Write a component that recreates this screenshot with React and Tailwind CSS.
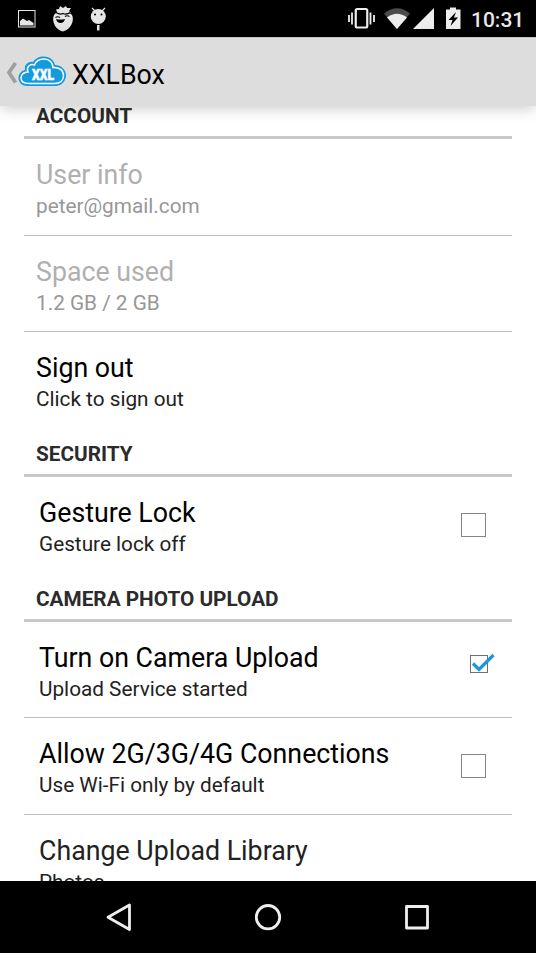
import React from 'react'

function SectionHeader({ children, className = 'h-12' }) {
  return (
    <div className={`flex items-end border-b-3 border-[#c8c8c8] px-3 pb-2 ${className}`}>
      <h2 className="text-[20.75px] leading-6 font-bold text-[#2b2b2b]">{children}</h2>
    </div>
  )
}

function Checkbox({ checked }) {
  if (checked) {
    return (
      <svg width="28" height="26" viewBox="0 0 28 26" fill="none" className="mt-7 mr-4 self-start">
        <rect x="2.5" y="5.5" width="17" height="17" stroke="#707070" />
        <path d="M5 13.500l6 6L25.500 5" stroke="#1a96dc" strokeWidth="3.2" />
      </svg>
    )
  }
  return <span className="mr-[26px] h-6 w-[25px] border border-[#858585]" />
}

function Row({ title, summary, disabled, inset, checkbox, checked, divider, titleClass, className = '' }) {
  const tone = titleClass || (disabled ? 'text-[#b0b0b0]' : 'text-black')
  return (
    <div className={`flex items-center ${divider ? 'border-b border-[#bdbdbd]' : ''} ${inset ? 'pl-[15px]' : 'pl-3'} ${className}`}>
      <div className="min-w-0 flex-1 pt-[7px] whitespace-nowrap">
        <div className={`text-[26.75px] leading-8 ${tone}`}>{title}</div>
        <div className={`text-[20.75px] leading-[31px] ${disabled ? 'text-[#979797]' : 'text-[#222]'}`}>{summary}</div>
      </div>
      {checkbox && <Checkbox checked={checked} />}
    </div>
  )
}

function StatusBar() {
  return (
    <div className="flex h-[37px] shrink-0 bg-black">
      <svg width="120" height="37" viewBox="0 0 120 37" fill="#e6e6e6">
        {/* screenshot notification */}
        <rect x="18.5" y="10.5" width="16.500" height="16.5" fill="none" stroke="#e6e6e6" />
        <path d="M20 25.500v-4.500l3-2.500 4 2.500 2-1 3 2 1.500 1v2.500z" />
        {/* strawberry face */}
        <path d="M54 15c2-2.500 5-1.500 9-1.500s7-1.500 9 1.500c3 6-2 15-9 16.500C56 30.500 51 21 54 15z" />
        <path d="M56 9.500l3-.5 1-3 3 2 3-2 1 2 4 0-2 3 2 2-8 1-8 0 2-2z" />
        <path d="M56 12.500q4 2.500 7 1 4 1.500 7-1M55.500 17.500q2-1.500 4.500 0M65 16.500q2-1.500 4.500 0" fill="none" stroke="#000" strokeWidth="1.200" />
        <path d="M56 19q5 1 9 0-1 4-4.500 4T56 19z" fill="#000" />
        {/* debug bug */}
        <circle cx="98.300" cy="16.500" r="7.500" />
        <path d="M95 11l-3-3M102 11l3-3" stroke="#e6e6e6" strokeWidth="1.200" />
        <rect x="97" y="25" width="2.500" height="5.500" />
        <circle cx="95" cy="14.500" r="1" fill="#000" />
        <circle cx="101.500" cy="14.500" r="1" fill="#000" />
      </svg>
      <svg width="125" height="37" viewBox="340 0 125 37" className="ml-auto" fill="#eee">
        {/* vibrate */}
        <rect x="355.750" y="9" width="11.500" height="18.500" rx="1.500" fill="none" stroke="#eee" strokeWidth="2.200" />
        <path d="M349 15v7M352 12.500v12M370.500 12.500v12M374 15v7" stroke="#eee" strokeWidth="1.800" />
        {/* wifi */}
        <path d="M384 13.500Q397 3 410 13.500L397 29z" fill="#4c4c4c" />
        <path d="M387 17.500Q397 10 407 17.500L397 29z" />
        {/* signal */}
        <path d="M434 8v21h-21z" />
        {/* battery */}
        <path d="M446 9.500h4V7.500h6v2h4.500V29H446z" />
        <path d="M456 12l-7.500 8h4l-2 6 7.500-8.500h-4z" fill="#000" />
      </svg>
      <span className="w-[71px] pl-[6px] text-[21px] leading-[40px] font-medium text-[#e8e8e8]">10:31</span>
    </div>
  )
}

function ActionBar() {
  return (
    <header className="relative z-10 flex h-[69px] shrink-0 items-center border-t border-[#c4c4c4] bg-[#dddddd] shadow-[0_2px_14px_rgba(0,0,0,0.22)]">
      <svg width="72" height="68" viewBox="0 38 72 68">
        <path d="M15.500 63L9 72.500l6.500 10" fill="none" stroke="#a0a0a0" strokeWidth="3.800" />
        <path
          d="M28 86C22 86 18.500 82.500 18.500 78c0-4 2.500-7 6.500-8-1-5 3-9 8-8 2-3.500 6-5.500 11-5.500 6 0 10 4 11 8.500 7 .5 11 5 11 10.500S61.500 86 55 86z"
          fill="#139bdd"
        />
        <path
          d="M29 83.500C24 83.500 21 81.500 21 78c0-3.500 3-6 7-6-2-5 2-8.500 6.500-7 1.500-4 5-6 9.500-6 5.500 0 9 4 9 8.500 6.500-.5 10.500 3 10.500 8s-3.500 8-9 8z"
          fill="none"
          stroke="#fff"
          strokeWidth="1.500"
        />
        <text x="32" y="80" fill="#fff" stroke="#fff" strokeWidth="0.5" fontFamily="Roboto" fontSize="14" fontWeight="900" textLength="22" lengthAdjust="spacingAndGlyphs">XXL</text>
      </svg>
      <h1 className="pt-1.5 text-[26.75px] text-black">XXLBox</h1>
    </header>
  )
}

function NavBar() {
  return (
    <nav className="h-[72px] shrink-0 bg-black">
      <svg width="536" height="72" viewBox="0 881 536 72" fill="none" stroke="#eee" strokeWidth="2.800" strokeLinejoin="round">
        <path d="M129.500 905v24.500l-21.500-12.300z" />
        <circle cx="268" cy="917.200" r="11.700" />
        <rect x="406.500" y="906.500" width="21" height="21.500" />
      </svg>
    </nav>
  )
}

export default function App() {
  return (
    <div className="flex h-[953px] w-[536px] flex-col overflow-hidden bg-white font-[Roboto,sans-serif]">
      <StatusBar />
      <ActionBar />
      <main className="min-h-0 flex-1 overflow-hidden px-6">
        <SectionHeader className="h-[33px]">ACCOUNT</SectionHeader>
        <Row title="User info" summary="peter@gmail.com" disabled divider className="h-[97px]" />
        <Row title="Space used" summary="1.2 GB / 2 GB" disabled divider className="h-24" />
        <Row title="Sign out" summary="Click to sign out" className="h-24" />
        <SectionHeader className="h-[49px]">SECURITY</SectionHeader>
        <Row title="Gesture Lock" summary="Gesture lock off" inset checkbox className="h-24" />
        <SectionHeader className="h-[49px]">CAMERA PHOTO UPLOAD</SectionHeader>
        <Row title="Turn on Camera Upload" summary="Upload Service started" inset checkbox checked divider className="h-24" />
        <Row title="Allow 2G/3G/4G Connections" summary="Use Wi-Fi only by default" inset checkbox divider className="h-[97px]" />
        <Row title="Change Upload Library" summary="Photos" inset titleClass="text-[#222]" className="h-[95px]" />
      </main>
      <NavBar />
    </div>
  )
}
